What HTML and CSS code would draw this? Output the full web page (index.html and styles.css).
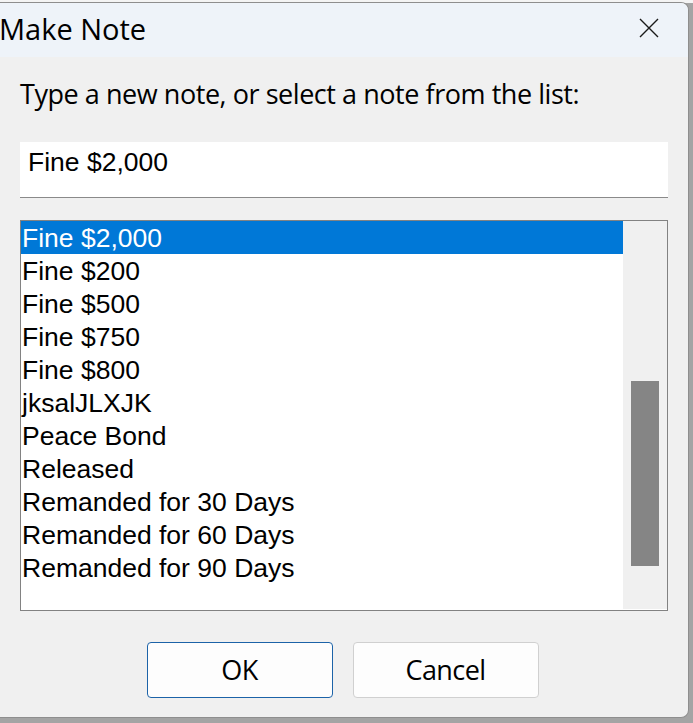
FILE: index.html
```html
<!DOCTYPE html>
<html lang="en">
<head>
<meta charset="utf-8">
<title>Make Note</title>
<link rel="stylesheet" href="styles.css">
</head>
<body>
<div class="window">
  <div class="titlebar">
    <span class="title">Make Note</span>
    <svg class="close" width="20" height="20" viewBox="0 0 20 20" aria-hidden="true">
      <path d="M1 1 L19 19 M19 1 L1 19" stroke="#1a1a1a" stroke-width="1.4" fill="none"/>
    </svg>
  </div>
  <div class="content">
    <div class="label">Type a new note, or select a note from the list:</div>
    <div class="input">Fine $2,000</div>
    <div class="listbox">
      <div class="items">
        <div class="item selected">Fine $2,000</div>
        <div class="item">Fine $200</div>
        <div class="item">Fine $500</div>
        <div class="item">Fine $750</div>
        <div class="item">Fine $800</div>
        <div class="item">jksalJLXJK</div>
        <div class="item">Peace Bond</div>
        <div class="item">Released</div>
        <div class="item">Remanded for 30 Days</div>
        <div class="item">Remanded for 60 Days</div>
        <div class="item">Remanded for 90 Days</div>
      </div>
      <div class="scrollbar"><div class="thumb"></div></div>
    </div>
    <div class="buttons">
      <div class="btn default">OK</div>
      <div class="btn">Cancel</div>
    </div>
  </div>
</div>
</body>
</html>
```

FILE: styles.css
```css
* { box-sizing: border-box; }
html, body { margin: 0; padding: 0; }
body {
  width: 693px;
  height: 723px;
  overflow: hidden;
  background: linear-gradient(#f4f4f4 0 3px, #a4a4a4 3px);
  font-family: "Open Sans", "Noto Sans", sans-serif;
  color: #000;
}
.window {
  margin-top: 2px;
  width: 689px;
  height: 716px;
  background: #f0f0f0;
  border: 1px solid #8e8e8e;
  border-left: 0;
  border-radius: 0 8px 8px 0;
  overflow: hidden;
}
.titlebar {
  height: 54px;
  background: #eef3f9;
  display: flex;
  align-items: center;
  justify-content: space-between;
  padding: 0 29px 3px 0;
}
.title {
  font-size: 29px;
  line-height: 36px;
  margin-left: -1px;
}
.close { display: block; margin-top: -2px; }
.content {
  padding: 0 20px 0 20px;
}
.label {
  margin-top: 19px;
  font-size: 27px;
  line-height: 35px;
  letter-spacing: -0.45px;
  white-space: nowrap;
}
.input {
  margin-top: 31px;
  height: 56px;
  background: #fff;
  border-bottom: 1px solid #8a8a8a;
  font-family: "Liberation Sans", Arial, sans-serif;
  font-size: 26.5px;
  line-height: 30px;
  padding: 5px 0 0 8px;
}
.listbox {
  margin-top: 22px;
  height: 391px;
  border: 1px solid #828282;
  background: #fff;
  display: flex;
}
.items {
  flex: 1;
  font-family: "Liberation Sans", Arial, sans-serif;
  font-size: 26.5px;
}
.item {
  height: 33px;
  line-height: 31px;
  padding: 2px 0 0 1px;
  white-space: nowrap;
}
.item.selected {
  background: #0078d7;
  color: #fff;
}
.scrollbar {
  width: 44px;
  background: #f0f0f0;
  margin-bottom: 1px;
  padding: 160px 0 0 8px;
}
.thumb {
  width: 28px;
  height: 185px;
  background: #858585;
}
.buttons {
  display: flex;
  justify-content: center;
  gap: 20px;
  margin-top: 31px;
  padding-right: 3px;
}
.btn {
  width: 186px;
  height: 56px;
  background: #fdfdfd;
  border: 1px solid #d0d0d0;
  border-radius: 4px;
  display: flex;
  align-items: center;
  justify-content: center;
  font-size: 27px;
  letter-spacing: -0.6px;
  padding-bottom: 2px;
}
.btn.default {
  border-color: #1c63a8;
}
```
